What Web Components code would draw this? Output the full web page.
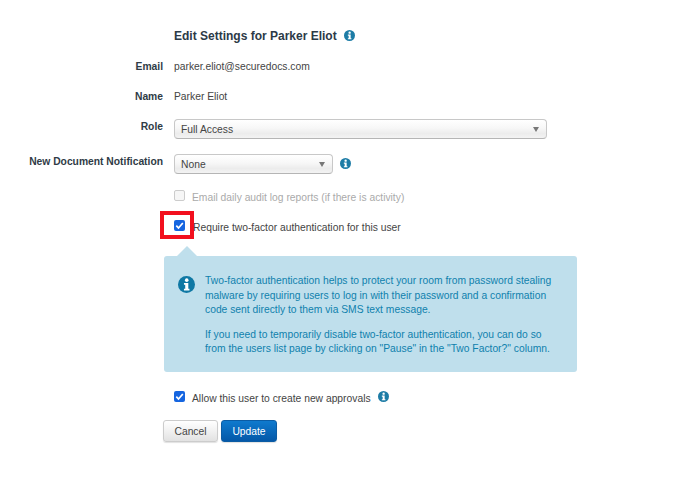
<!DOCTYPE html>
<html>
<head>
<meta charset="utf-8">
<title>Edit Settings</title>
<style>
	html, body { margin: 0; background: #fff; }
	body { font: 10.3px "Liberation Sans", Arial, sans-serif; color: #333; width: 688px; height: 479px; overflow: hidden; }
</style>
</head>
<body>
<settings-page>
	<form-row variant="title" style="--row-h:20px; --row-mt:25px">
		<span class="title" style="font-weight:bold; font-size:12px; color:#2c3a47; padding-top:2px">Edit Settings for Parker Eliot</span>
		<info-icon style="margin-left:7px"></info-icon>
	</form-row>
	<form-row label="Email" style="--row-h:14px; --row-mt:14px">parker.eliot@securedocs.com</form-row>
	<form-row label="Name" style="--row-h:14px; --row-mt:16px">Parker Eliot</form-row>
	<form-row label="Role" style="--row-h:20px; --row-mt:16px; --label-shift:-3px">
		<select-box style="width:373px">Full Access</select-box>
	</form-row>
	<form-row label="New Document Notification" style="--row-h:20px; --row-mt:15px; --label-shift:-3px">
		<select-box style="width:159px">None</select-box>
		<info-icon style="margin-left:7px; margin-top:-2px"></info-icon>
	</form-row>
	<check-row disabled style="--row-mt:15px">Email daily audit log reports (if there is activity)</check-row>
	<check-row checked tight style="--row-mt:16px">Require two-factor authentication for this user</check-row>
	<info-note>
		<p>Two-factor authentication helps to protect your room from password stealing malware by requiring users to log in with their password and a confirmation code sent directly to them via SMS text message.</p>
		<p>If you need to temporarily disable two-factor authentication, you can do so from the users list page by clicking on "Pause" in the "Two Factor?" column.</p>
	</info-note>
	<check-row checked info style="--row-mt:18px">Allow this user to create new approvals</check-row>
	<button-bar>
		<ui-button>Cancel</ui-button>
		<ui-button primary>Update</ui-button>
	</button-bar>
	<red-mark></red-mark>
</settings-page>

<script>
(function ()
{
	const infoSvg = ( size, color ) =>
	`<svg width="${ size }" height="${ size }" viewBox="0 0 16 16" style="display:block">
		<circle cx="8" cy="8" r="8" fill="${ color }"/>
		<circle cx="8.2" cy="3.9" r="1.7" fill="#fff"/>
		<path d="M5.6 6.6h4.1v5.3h1.1v1.7H5.6v-1.7h1.2V8.3H5.6z" fill="#fff"/>
	</svg>`;

	class SettingsPage extends HTMLElement
	{
		constructor()
		{
			super();

			this.attachShadow({ mode: 'open' }).innerHTML =
			`
			<style>
				:host { display: block; position: relative; width: 688px; height: 479px; overflow: hidden; }
			</style>
			<slot></slot>
			`;
		}
	}

	class FormRow extends HTMLElement
	{
		constructor()
		{
			super();

			const label = this.getAttribute( 'label' ) || '';

			this.attachShadow({ mode: 'open' }).innerHTML =
			`
			<style>
				:host {
					display:     flex;
					align-items: center;
					height:      var( --row-h, 14px );
					margin-top:  var( --row-mt, 0 );
				}
				.label {
					flex:         0 0 163px;
					text-align:   right;
					font-weight:  bold;
					color:        #2f3b46;
					white-space:  nowrap;
					margin-right: 11px;
					position:     relative;
					top:          var( --label-shift, 0 );
				}
				.value { display: flex; align-items: center; color: #444; white-space: nowrap; }
			</style>
			<div class="label">${ label }</div>
			<div class="value"><slot></slot></div>
			`;
		}
	}

	class InfoIcon extends HTMLElement
	{
		constructor()
		{
			super();

			this.attachShadow({ mode: 'open' }).innerHTML =
			`
			<style>
				:host { display: block; width: 11px; height: 11px; }
			</style>
			${ infoSvg( 11, '#1d7ca6' ) }
			`;
		}
	}

	class SelectBox extends HTMLElement
	{
		constructor()
		{
			super();

			this.attachShadow({ mode: 'open' }).innerHTML =
			`
			<style>
				:host {
					display:       flex;
					align-items:   center;
					box-sizing:    border-box;
					height:        20px;
					padding:       0 7px 0 6px;
					border:        1px solid #c8c8c8;
					border-bottom: 1.5px solid #b5b5b5;
					border-radius: 4px;
					background:    linear-gradient( #fff, #f7f7f7 45%, #ececec 75%, #f3f3f3 );
					color:         #444;
				}
				.text { flex: 1; }
				.arrow { width: 0; height: 0; border: 3px solid transparent; border-top: 5px solid #777; border-bottom: 0; }
			</style>
			<div class="text"><slot></slot></div>
			<div class="arrow"></div>
			`;
		}
	}

	class CheckRow extends HTMLElement
	{
		constructor()
		{
			super();

			const checked  = this.hasAttribute( 'checked' );
			const disabled = this.hasAttribute( 'disabled' );
			const tight    = this.hasAttribute( 'tight' );
			const box      = checked
				? `<svg viewBox="0 0 11 11" width="11" height="11" style="display:block"><path d="M2.3 5.7 4.5 8 8.8 3" fill="none" stroke="#fff" stroke-width="1.7"/></svg>`
				: '';

			this.attachShadow({ mode: 'open' }).innerHTML =
			`
			<style>
				:host {
					display:     flex;
					align-items: center;
					height:      14px;
					margin-top:  var( --row-mt, 0 );
					padding-left: 174px;
					color:       ${ disabled ? '#aaa' : '#444' };
					white-space: nowrap;
				}
				.box {
					box-sizing:    border-box;
					width:         11px;
					height:        11px;
					border-radius: 2px;
					margin-right:  ${ tight ? '8px' : '7px' };
					background:    ${ checked ? '#1565e0' : '#f6f6f6' };
					border:        ${ checked ? '0' : '1px solid #ccc' };
					margin-top:    -2px;
				}
				.text { padding-top: 2px; }
				.info { margin-left: 7px; margin-top: -1px; }
			</style>
			<div class="box">${ box }</div>
			<span class="text"><slot></slot></span>
			${ this.hasAttribute( 'info' ) ? '<info-icon class="info"></info-icon>' : '' }
			`;
		}
	}

	class InfoNote extends HTMLElement
	{
		constructor()
		{
			super();

			this.attachShadow({ mode: 'open' }).innerHTML =
			`
			<style>
				:host {
					display:       flex;
					position:      relative;
					box-sizing:    border-box;
					width:         413px;
					height:        116px;
					margin:        23px 0 0 164px;
					padding:       18px 22px 0 14px;
					background:    #bfdfec;
					border-radius: 3px;
					color:         #0f81ad;
					line-height:   14.6px;
				}
				.tip {
					position:   absolute;
					left:       13px;
					top:        -10px;
					width:      0;
					height:     0;
					border:     10.5px solid transparent;
					border-top: 0;
					border-bottom: 10px solid #bfdfec;
				}
				.icon { flex: 0 0 17px; margin: 2px 10px 0 0; }
				.body { flex: 1; }
				::slotted(p) { margin: 0 0 10px; }
			</style>
			<div class="tip"></div>
			<div class="icon">${ infoSvg( 17, '#0f78a4' ) }</div>
			<div class="body"><slot></slot></div>
			`;
		}
	}

	class ButtonBar extends HTMLElement
	{
		constructor()
		{
			super();

			this.attachShadow({ mode: 'open' }).innerHTML =
			`
			<style>
				:host { display: flex; gap: 3px; margin: 16px 0 0 163px; }
			</style>
			<slot></slot>
			`;
		}
	}

	class UiButton extends HTMLElement
	{
		constructor()
		{
			super();

			const primary = this.hasAttribute( 'primary' );

			this.attachShadow({ mode: 'open' }).innerHTML =
			`
			<style>
				:host {
					display:       flex;
					align-items:   center;
					justify-content: center;
					box-sizing:    border-box;
					height:        22px;
					width:         ${ primary ? '56px' : '55px' };
					border-radius: 3px;
					border:        1px solid ${ primary ? '#0b5ca4' : '#ccc' };
					background:    ${ primary ? 'linear-gradient( #0f7ace, #0458a8 )' : 'linear-gradient( #fff, #e2e2e2 )' };
					color:         ${ primary ? '#fff' : '#444' };
					box-shadow:    0 1px 1px rgba( 0, 0, 0, .12 );
				}
			</style>
			<slot></slot>
			`;
		}
	}

	// the annotation drawn over the screenshot
	class RedMark extends HTMLElement
	{
		constructor()
		{
			super();

			this.attachShadow({ mode: 'open' }).innerHTML =
			`
			<style>
				:host {
					display:    block;
					position:   absolute;
					left:       160px;
					top:        211px;
					width:      34px;
					height:     28px;
					box-sizing: border-box;
					border:     4px solid #f2101e;
				}
			</style>
			`;
		}
	}

	customElements.define( 'settings-page', SettingsPage );
	customElements.define( 'form-row', FormRow );
	customElements.define( 'info-icon', InfoIcon );
	customElements.define( 'select-box', SelectBox );
	customElements.define( 'check-row', CheckRow );
	customElements.define( 'info-note', InfoNote );
	customElements.define( 'button-bar', ButtonBar );
	customElements.define( 'ui-button', UiButton );
	customElements.define( 'red-mark', RedMark );
})();
</script>
</body>
</html>
